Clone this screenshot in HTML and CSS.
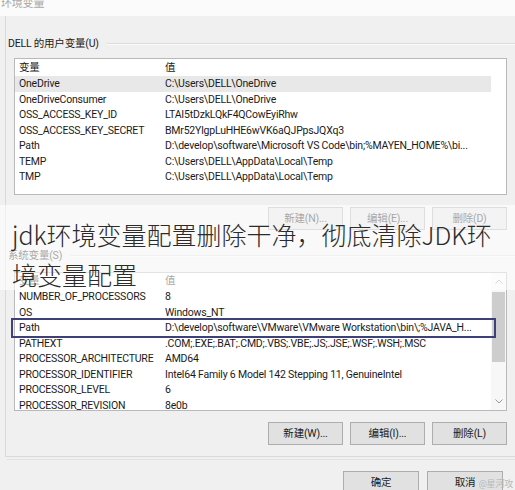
FILE: index.html
```html
<!DOCTYPE html>
<html lang="zh-CN">
<head>
<meta charset="utf-8">
<title>环境变量</title>
<link rel="stylesheet" href="styles.css">
</head>
<body>
<div class="title">环境变量</div>
<div class="frame">
  <div class="sec-head"><span class="sec-label">DELL 的用户变量(U)</span><i class="rule"></i></div>
  <div class="list list-user">
    <div class="rows">
      <div class="row hdr"><span>变量</span><span>值</span></div>
      <div class="row sel"><span>OneDrive</span><span>C:\Users\DELL\OneDrive</span></div>
      <div class="row"><span>OneDriveConsumer</span><span>C:\Users\DELL\OneDrive</span></div>
      <div class="row"><span>OSS_ACCESS_KEY_ID</span><span>LTAI5tDzkLQkF4QCowEyiRhw</span></div>
      <div class="row"><span>OSS_ACCESS_KEY_SECRET</span><span>BMr52YlgpLuHHE6wVK6aQJPpsJQXq3</span></div>
      <div class="row"><span>Path</span><span>D:\develop\software\Microsoft VS Code\bin;%MAYEN_HOME%\bi...</span></div>
      <div class="row"><span>TEMP</span><span>C:\Users\DELL\AppData\Local\Temp</span></div>
      <div class="row"><span>TMP</span><span>C:\Users\DELL\AppData\Local\Temp</span></div>
    </div>
    <div class="sb-empty"></div>
  </div>
  <div class="btns">
    <div class="btn">新建(N)...</div>
    <div class="btn">编辑(E)...</div>
    <div class="btn">删除(D)</div>
  </div>
  <div class="sec-head sys-head"><span class="sec-label">系统变量(S)</span><i class="rule"></i></div>
  <div class="list list-sys">
    <div class="rows">
      <div class="row hdr"><span>变量</span><span>值</span></div>
      <div class="row"><span>NUMBER_OF_PROCESSORS</span><span>8</span></div>
      <div class="row"><span>OS</span><span>Windows_NT</span></div>
      <div class="row"><span>Path</span><span>D:\develop\software\VMware\VMware Workstation\bin\;%JAVA_H...</span></div>
      <div class="row"><span>PATHEXT</span><span>.COM;.EXE;.BAT;.CMD;.VBS;.VBE;.JS;.JSE;.WSF;.WSH;.MSC</span></div>
      <div class="row"><span>PROCESSOR_ARCHITECTURE</span><span>AMD64</span></div>
      <div class="row"><span>PROCESSOR_IDENTIFIER</span><span>Intel64 Family 6 Model 142 Stepping 11, GenuineIntel</span></div>
      <div class="row"><span>PROCESSOR_LEVEL</span><span>6</span></div>
      <div class="row"><span>PROCESSOR_REVISION</span><span>8e0b</span></div>
    </div>
    <div class="sb">
      <div class="sb-arrow"><svg width="8" height="5" viewBox="0 0 8 5"><path d="M0.5 4.5 L4 1 L7.5 4.5" fill="none" stroke="#9a9a9a" stroke-width="1"/></svg></div>
      <div class="sb-track"><div class="sb-thumb"></div></div>
      <div class="sb-arrow"><svg width="8" height="5" viewBox="0 0 8 5"><path d="M0.5 0.5 L4 4 L7.5 0.5" fill="none" stroke="#9a9a9a" stroke-width="1"/></svg></div>
    </div>
    <div class="mark"></div>
  </div>
  <div class="btns">
    <div class="btn">新建(W)...</div>
    <div class="btn">编辑(I)...</div>
    <div class="btn">删除(L)</div>
  </div>
</div>
<div class="frame-line"></div>
<div class="footer">
  <div class="btn btn-wide">确定</div>
  <div class="btn btn-wide">取消</div>
</div>
<div class="watermark">@星河攻</div>
<div class="overlay">jdk环境变量配置删除干净，彻底清除JDK环境变量配置</div>
</body>
</html>
```
FILE: styles.css
```css
* { box-sizing: border-box; }
body {
  margin: 0;
  width: 515px;
  height: 490px;
  overflow: hidden;
  position: relative;
  background: #f0f0f0;
  font-family: Roboto, "Noto Sans CJK SC", sans-serif;
  font-size: 10.5px;
  letter-spacing: -0.2px;
  color: #1b1b1b;
}
.title {
  height: 16px;
  background: #fbfbfb;
  color: #a8a8a8;
  font-size: 11px;
  line-height: 8px;
  overflow: hidden;
  padding-left: 1px;
}
.frame {
  margin-left: 5px;
  border-left: 1px solid #d9d9d9;
  border-bottom: 1px solid #d9d9d9;
  padding: 21px 0 11px 0;
}
.frame-line {
  margin: 2px 0 0 7px;
  height: 1px;
  background: #e2e2e2;
}
.sec-head {
  display: flex;
  align-items: center;
  height: 14px;
  padding-left: 2px;
}
.sec-label {
  line-height: 14px;
  white-space: nowrap;
}
.rule {
  flex: 1;
  margin-left: 8px;
  height: 2px;
  border-top: 1px solid #dcdcdc;
  border-bottom: 1px solid #fafafa;
}
.sys-head { margin-top: 19px; }
.list {
  display: grid;
  grid-template-columns: 1fr 15px;
  margin: 7px 8px 0 8px;
  border: 1px solid #b9b9b9;
  background: #fff;
  position: relative;
}
.list-user { height: 137px; }
.list-sys { height: 139px; margin-top: 9px; }
.rows { overflow: hidden; }
.row {
  display: grid;
  grid-template-columns: 146px 1fr;
  height: 15.5px;
  line-height: 15.5px;
  padding-left: 4px;
  white-space: nowrap;
}
.row span { overflow: hidden; }
.row.hdr { height: 17px; line-height: 17px; }
.list-sys .row.hdr { height: 16px; line-height: 16px; }
.row.sel { background: #e8e8e8; }
.mark {
  position: absolute;
  left: -4px;
  top: 45px;
  width: 485px;
  height: 20px;
  border: 2px solid #3d4178;
}
.sb {
  display: flex;
  flex-direction: column;
  background: #f7f7f7;
  padding: 0 1px;
}
.sb-arrow {
  height: 17px;
  display: flex;
  align-items: center;
  justify-content: center;
}
.sb-track { flex: 1; padding-top: 2px; }
.sb-thumb { height: 70px; background: #cdcdcd; }
.btns {
  display: flex;
  justify-content: flex-end;
  gap: 7px;
  margin: 12px 8px 0 0;
}
.list-sys + .btns { margin-top: 11px; }
.btn {
  width: 75px;
  height: 23px;
  background: #e1e1e1;
  border: 1px solid #adadad;
  text-align: center;
  line-height: 21px;
  white-space: nowrap;
}
.footer {
  display: flex;
  justify-content: flex-end;
  gap: 8px;
  margin: 11px 12px 0 0;
}
.btn-wide { width: 76px; }
.watermark {
  position: absolute;
  right: 2px;
  bottom: 0;
  font-size: 9px;
  line-height: 12px;
  color: #b8b8b8;
}
.overlay {
  position: absolute;
  left: 0;
  right: 0;
  top: 205px;
  height: 85px;
  padding: 9px 0 0 12px;
  background: rgba(255, 255, 255, 0.6);
  font-family: "Noto Sans CJK SC", sans-serif;
  letter-spacing: 0;
  font-weight: 300;
  font-size: 25px;
  line-height: 40px;
  color: #2b2b2b;
}
```
